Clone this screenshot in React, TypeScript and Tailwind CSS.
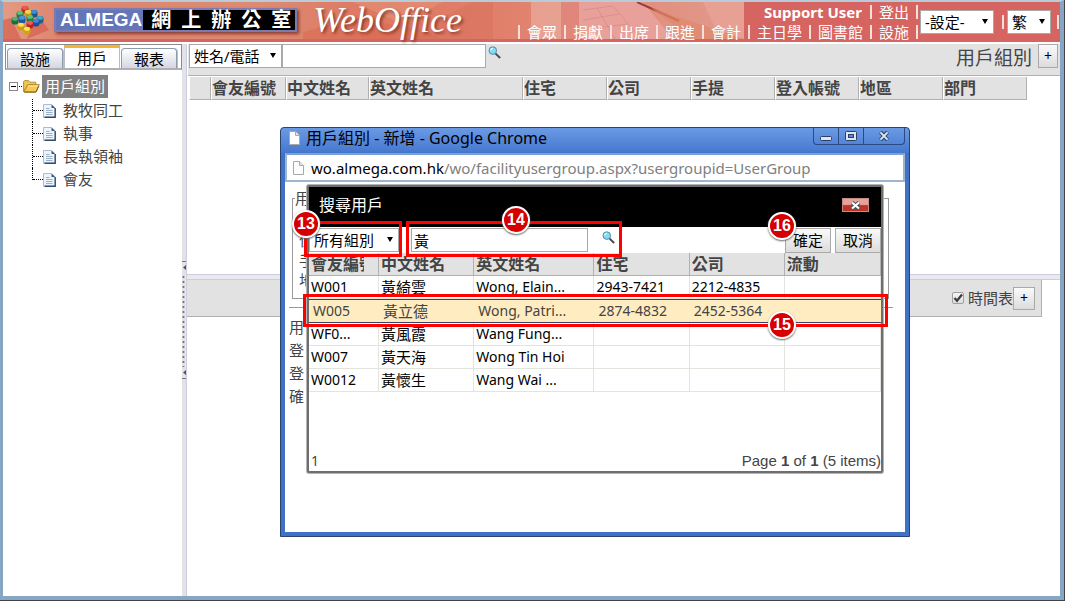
import React from "react";

const MENU = ["會眾", "捐獻", "出席", "跟進", "會計", "主日學", "圖書館", "設施"];

const GROUPS = ["教牧同工", "執事", "長執領袖", "會友"];

const MAIN_COLUMNS = [
  { label: "", width: "w-[22px]" },
  { label: "會友編號", width: "w-[75px]" },
  { label: "中文姓名", width: "w-[83px]" },
  { label: "英文姓名", width: "w-[154px]" },
  { label: "住宅", width: "w-[84px]" },
  { label: "公司", width: "w-[84px]" },
  { label: "手提", width: "w-[84px]" },
  { label: "登入帳號", width: "w-[84px]" },
  { label: "地區", width: "w-[84px]" },
  { label: "部門", width: "w-[84px]" },
];

const SEARCH_COLUMNS = [
  { label: "會友編號", width: "w-[70px]" },
  { label: "中文姓名", width: "w-[95px]" },
  { label: "英文姓名", width: "w-[120px]" },
  { label: "住宅", width: "w-[95px]" },
  { label: "公司", width: "w-[95px]" },
  { label: "流動", width: "w-[96px]" },
];

const USERS = [
  ["W001", "黃綺雲", "Wong, Elain...", "2943-7421", "2212-4835", ""],
  ["W005", "黃立德", "Wong, Patri...", "2874-4832", "2452-5364", ""],
  ["WF0...", "黃風霞", "Wang Fung...", "", "", ""],
  ["W007", "黃天海", "Wong Tin Hoi", "", "", ""],
  ["W0012", "黃懷生", "Wang Wai ...", "", "", ""],
];

const SELECTED = "W005";

function Picker({
  label,
  value,
  className,
}: {
  label: string;
  value: string;
  className: string;
}) {
  return (
    <span className={`relative flex h-6 ${className}`}>
      <select
        aria-label={label}
        defaultValue={value}
        className="h-full w-full appearance-none border border-[#a9a9a9] bg-white pl-1 text-[15px] leading-5 text-black"
      >
        <option>{value}</option>
      </select>
      <svg
        viewBox="0 0 6 5"
        className="pointer-events-none absolute top-[9px] right-1.5 h-[5px] w-1.5"
      >
        <path d="M0 0H6L3 5Z" fill="#000" />
      </svg>
    </span>
  );
}

function Magnifier() {
  return (
    <svg viewBox="0 0 13 13" className="size-[13px]">
      <path d="M7.6 7.6 11.6 11.4" stroke="#4a4a4a" strokeWidth="2" strokeLinecap="round" />
      <circle cx="4.8" cy="4.6" r="3.8" fill="#7fdcf7" stroke="#5d86a0" strokeWidth="1" />
      <path d="M2.8 4.4A2.2 2.2 0 0 1 5 2.4" stroke="#e4fbff" strokeWidth="1.3" fill="none" />
    </svg>
  );
}

function PageIcon() {
  return (
    <svg viewBox="0 0 13 14" className="h-3.5 w-[13px]">
      <path d="M.5 .5H8.5L12.2 4V13.3H.5Z" fill="#eef4fb" stroke="#a7bbdb" />
      <path d="M12.2 4V13.3H1.5" fill="none" stroke="#2f4d6e" strokeWidth="1.4" />
      <path d="M8.5 .5V4H12.2Z" fill="#3b5a7c" />
      <path d="M3 4.5H6.5M3 6.5H9.5M3 8.5H9.5M3 10.5H9.5" stroke="#9db0c9" />
    </svg>
  );
}

function BlankPage() {
  return (
    <svg viewBox="0 0 11 14" className="h-3.5 w-[11px]">
      <path d="M.5 .5H6.5L10.5 4.5V13.5H.5Z" fill="#fdfdfd" stroke="#a8a8a8" />
      <path d="M6.5 .5V4.5H10.5" fill="#e8e8e8" stroke="#a8a8a8" />
    </svg>
  );
}

function FolderIcon() {
  return (
    <svg viewBox="0 0 17 13" className="h-[13px] w-[17px]">
      <path d="M.6 11.5V1.6L1.6 .6H5.5L7 2.2H12.8V4.5H5Z" fill="#f3c64c" stroke="#a8873a" strokeWidth=".9" />
      <path d="M.9 12 4.8 4.6H16.3L13 12Z" fill="#fbc94a" stroke="#b0842c" strokeWidth=".9" />
      <path d="M5.3 5.4H15L14.5 6.6H4.7Z" fill="#ffe9a6" />
      <path d="M1.2 12.1H13L15.8 6" fill="none" stroke="#7c5c1c" strokeWidth="1" />
    </svg>
  );
}

function Logo() {
  const blocks: [number, number, string, string][] = [
    [15, 5, "#b92626", "#ee5a4c"],
    [10, 10, "#2c7d45", "#5cc07c"],
    [24, 9, "#1c5490", "#3f8ed0"],
    [18, 9, "#c29a1c", "#f4d84c"],
    [30, 15, "#205f86", "#48a4c4"],
    [5, 16, "#1d6e3e", "#4ab478"],
    [12, 15, "#1d56a4", "#4b94e0"],
    [20, 14, "#2a8048", "#5ec284"],
    [26, 18, "#1f4e9c", "#4a86d8"],
    [11, 22, "#cf9c10", "#fae04e"],
    [20, 20, "#b82424", "#ee5c4c"],
    [17, 26, "#d2a312", "#fce758"],
  ];
  return (
    <svg viewBox="0 0 34 32" className="h-8 w-[34px] shrink-0">
      {blocks.map(([x, y, side, top]) => (
        <g key={`${x}-${y}`}>
          <rect x={x - 3.5} y={y - 3} width="7" height="7.5" rx="2.4" fill={side} />
          <ellipse cx={x} cy={y - 1.2} rx="2.9" ry="2" fill={top} />
        </g>
      ))}
    </svg>
  );
}

function BannerArt() {
  return (
    <svg
      viewBox="0 0 741 37"
      preserveAspectRatio="none"
      className="absolute top-0 left-0 h-[37px] w-[741px]"
    >
      <defs>
        <linearGradient id="banner">
          <stop offset="0" stopColor="#e39a84" />
          <stop offset=".08" stopColor="#dc8570" />
          <stop offset=".35" stopColor="#de8a70" />
          <stop offset=".5" stopColor="#dd7863" />
          <stop offset=".66" stopColor="#e07f6a" />
          <stop offset="1" stopColor="#e29a8c" />
        </linearGradient>
      </defs>
      <rect width="741" height="37" fill="url(#banner)" />
      <path d="M0 18 8 16 18 37H0ZM28 24 38 17 46 28 24 37Z" fill="#d4604f" opacity=".7" />
      <path d="M300 30 350 16 420 28 440 37H300Z" fill="#d9694f" opacity=".55" />
      <path d="M350 0H440L400 22Z" fill="#e59376" opacity=".6" />
      <path d="M430 20 470 0H490V37H440Z" fill="#d8705c" opacity=".5" />
      <path d="M528 0H558V37H528Z" fill="#e8a898" opacity=".8" />
      <path d="M558 0H576V37H558Z" fill="#e0867a" />
      <path d="M576 0H640L670 37H576Z" fill="#e8a09a" />
      <path d="M580 8 610 4 638 37M580 18 616 12M580 28 624 22M594 6 612 37" fill="none" stroke="#d98886" opacity=".7" />
      <path d="M634 0 676 19" stroke="#a33b33" strokeWidth="2" />
      <path d="M648 6 741 37H690Z" fill="#e0876b" opacity=".7" />
      <path d="M700 0H741V37L712 26Z" fill="#e6a094" />
    </svg>
  );
}

function Bar() {
  return <span className="h-3.5 w-0.5 shrink-0 bg-[#f6dedc]" />;
}

function Header() {
  return (
    <header className="relative flex h-10 items-start bg-[#d66461] text-white">
      <BannerArt />
      <div className="relative flex min-w-0 flex-1 items-center pl-[7px]">
        <Logo />
        <div className="ml-2.5 flex h-6 items-center border-2 border-[#7c7bb0] bg-[#6475b8] shadow-[2px_2px_3px_#8a3c34]">
          <span className="pr-px pl-1 font-['Liberation_Sans',sans-serif] text-[19px] leading-5 font-bold">
            ALMEGA
          </span>
          <span className="flex h-5 items-center gap-2.5 bg-black pr-1 pl-2 font-['Liberation_Serif','Noto_Sans_CJK_TC',serif] text-xl leading-5 font-bold">
            {["網", "上", "辦", "公", "室"].map((c) => (
              <span key={c}>{c}</span>
            ))}
          </span>
        </div>
        <span className="ml-4 font-['Liberation_Serif',serif] text-4xl leading-9 italic [text-shadow:2px_2px_3px_#8a3c34]">
          WebOffice
        </span>
      </div>
      <nav className="relative flex shrink-0 flex-col items-end text-[15px] leading-5">
        <div className="flex items-center">
          <b className="px-2">Support User</b>
          <Bar />
          <a href="#logout" className="px-[7px]">
            登出
          </a>
          <Bar />
        </div>
        <div className="flex items-center">
          <Bar />
          {MENU.map((item) => (
            <React.Fragment key={item}>
              <a href={`#${item}`} className="px-[7px]">
                {item}
              </a>
              <Bar />
            </React.Fragment>
          ))}
        </div>
      </nav>
      <div className="relative mt-2 flex items-center gap-1 pr-px pl-0.5">
        <Picker label="設定" value="-設定-" className="w-[74px]" />
        <span className="flex items-center gap-[3px] pl-1">
          <Bar />
          <Picker label="語言" value="繁" className="w-11" />
        </span>
        <span className="pl-0.5">
          <span className="block h-3.5 w-0.5 bg-[#f6dedc]" />
        </span>
      </div>
    </header>
  );
}

function Sidebar() {
  const idle =
    "h-5 w-14 rounded-t border border-b-0 border-[#8c9cab] bg-linear-to-b from-white to-[#d5d6e2] shadow-[1px_0_0_#b8bcd0]";
  return (
    <aside className="flex w-[179px] shrink-0 flex-col">
      <div className="ml-0.5 flex h-[26px] items-end gap-px overflow-hidden border border-b-2 border-[#8b8b8b] border-b-[#b0b0b0] bg-white px-px text-[15px] leading-5 text-black">
        <button className={idle}>設施</button>
        <button className="h-[23px] w-14 border-x border-t-[3px] border-[#b9bcc6] border-t-[#f7b32b] bg-white">
          用戶
        </button>
        <button className={idle}>報表</button>
      </div>
      <div className="px-1.5 pt-[5px] text-[15px] leading-[23px] text-[#444]">
        <div className="flex items-center">
          <button
            aria-label="收合"
            className="flex size-[9px] items-center justify-center border border-[#888] bg-white"
          >
            <span className="h-px w-[5px] bg-black" />
          </button>
          <span className="mx-px w-[3px] border-t border-dotted border-black" />
          <FolderIcon />
          <a href="#all" className="ml-0.5 bg-[#808080] px-[3px] text-white">
            用戶組別
          </a>
        </div>
        <ul className="ml-[23px] pt-px">
          {GROUPS.map((name, i) => (
            <li key={name} className="flex h-[23px] items-center">
              <span
                className={
                  i === GROUPS.length - 1
                    ? "h-3 self-start border-l border-dotted border-black"
                    : "h-full border-l border-dotted border-black"
                }
              />
              <span className="w-2.5 border-t border-dotted border-black" />
              <a href={`#${name}`} className="flex items-center gap-[7px]">
                <PageIcon />
                {name}
              </a>
            </li>
          ))}
        </ul>
      </div>
    </aside>
  );
}

function Splitter() {
  return (
    <div className="flex w-[5px] shrink-0 flex-col items-center border-r border-[#cdcdde] bg-[#e2e2ea] pt-[217px]">
      <svg viewBox="0 0 4 118" className="h-[118px] w-1">
        <path d="M0 .5H4M0 117.5H4" stroke="#777" />
        <path d="M4 4V9L1 6.5ZM4 109V114L1 111.5Z" fill="#555" />
        <path d="M2 15V106" stroke="#fff" strokeWidth="3" strokeDasharray="2 3" />
        <path d="M1.5 15V106" stroke="#777" strokeWidth="2" strokeDasharray="2 3" />
      </svg>
    </div>
  );
}

const raised =
  "border border-[#a9a9a9] bg-linear-to-b from-[#fafafa] to-[#dcdcdc] text-black";

function Main() {
  return (
    <main className="flex min-w-0 flex-1 flex-col">
      <div className="ml-px flex h-8 items-start border-b border-[#b0b0b0] bg-[#e2e2e2] pl-px">
        <Picker label="搜尋欄位" value="姓名/電話" className="w-[93px]" />
        <input
          aria-label="搜尋"
          className="h-6 w-[204px] border border-[#a9a9a9] bg-white px-1 text-[15px]"
        />
        <button aria-label="開始搜尋" className="ml-0.5 pt-0.5">
          <Magnifier />
        </button>
        <h1 className="ml-auto pr-1.5 text-[19px] leading-7 text-[#444]">用戶組別</h1>
        <button aria-label="新增" className={`mr-0.5 h-6 w-5 text-sm leading-5 ${raised}`}>
          +
        </button>
      </div>
      <div className="h-[198px] pt-px">
        <table className="ml-0.5 w-[838px] table-fixed border-separate border-spacing-0 text-left text-base leading-[21px] text-[#444]">
          <thead>
            <tr>
              {MAIN_COLUMNS.map((c) => (
                <th
                  key={c.label}
                  className={`h-[23px] overflow-hidden border-r border-b border-l border-[#b0b0b0] border-l-white bg-[#e2e2e2] p-0 font-bold whitespace-nowrap ${c.width}`}
                >
                  {c.label}
                </th>
              ))}
            </tr>
          </thead>
        </table>
      </div>
      <div className="h-1.5 border-y border-[#cdcdde] bg-[#e9e9f2]" />
      <div className="mr-[18px] flex h-[37px] items-center justify-end border-r border-b border-[#b0b0b0] bg-[#e2e2e2] pr-1.5 text-[15px] text-[#444]">
        <label className="flex items-center gap-1">
          <span className="relative flex size-3">
            <input
              type="checkbox"
              defaultChecked
              className="size-3 appearance-none rounded-xs border border-[#a0a0a0] bg-linear-to-b from-[#f4f4f4] to-[#dedede]"
            />
            <svg viewBox="0 0 12 12" className="pointer-events-none absolute inset-0 size-3">
              <path d="M2.5 6 5 8.8 10 2.5" fill="none" stroke="#3c3c3c" strokeWidth="2.2" />
            </svg>
          </span>
          時間表
        </label>
        <button aria-label="新增時間表" className={`h-[23px] w-[22px] text-sm leading-5 ${raised}`}>
          +
        </button>
      </div>
    </main>
  );
}

function SearchDialog() {
  return (
    <section className="absolute top-[3px] left-[22px] flex h-[288px] w-[576px] flex-col rounded-xs border-2 border-[#6e6e6e] bg-white ring-1 ring-[#b4b4b4]">
      <div className="flex h-10 shrink-0 items-center justify-between bg-black pr-3 pb-1 pl-2.5 text-white">
        <h2 className="text-base leading-6">搜尋用戶</h2>
        <button
          aria-label="關閉"
          className="flex h-3.5 w-[27px] items-center justify-center border border-[#c58a86] bg-linear-to-b from-[#e2a49b] from-45% to-[#b93626] to-55%"
        >
          <svg viewBox="0 0 11 9" className="h-[9px] w-[11px]">
            <path d="M2 1.5 9 7.5M9 1.5 2 7.5" stroke="#4b4b57" strokeWidth="4" />
            <path d="M2 1.5 9 7.5M9 1.5 2 7.5" stroke="#fff" strokeWidth="2.2" />
          </svg>
        </button>
      </div>
      <div className="flex h-[26px] shrink-0 items-center">
        <Picker label="組別" value="所有組別" className="w-[90px]" />
        <input
          aria-label="姓名"
          defaultValue="黃"
          className="ml-3 h-6 w-[177px] border border-[#a9a9a9] bg-white px-0.5 text-[15px] text-black"
        />
        <button aria-label="搜尋姓名" className="mb-1.5 ml-3.5">
          <Magnifier />
        </button>
        <button className={`ml-auto h-[25px] w-[46px] text-[15px] leading-5 ${raised}`}>確定</button>
        <button className={`ml-1 h-[25px] w-[46px] text-[15px] leading-5 ${raised}`}>取消</button>
      </div>
      <table className="w-full table-fixed border-separate border-spacing-0 text-left text-sm leading-[22px] whitespace-nowrap text-black">
        <thead>
          <tr>
            {SEARCH_COLUMNS.map((c) => (
              <th
                key={c.label}
                className={`h-[23px] border-r border-b border-[#b0b0b0] bg-[#e2e2e2] p-0 pl-0.5 text-base leading-[22px] font-bold text-[#444] ${c.width}`}
              >
                <div className="mr-3.5 overflow-hidden">{c.label}</div>
              </th>
            ))}
          </tr>
        </thead>
        <tbody>
          {USERS.map((row) => (
            <tr key={row[0]} className={row[0] === SELECTED ? "bg-[#ffecc0] text-[#444]" : ""}>
              {row.map((cell, i) => (
                <td
                  key={i}
                  className={`overflow-hidden p-0 align-top ${i === 1 ? "text-[15px]" : ""} ${
                    row[0] === SELECTED
                      ? "h-6 border-y border-[#3f3f66] pl-1"
                      : "h-[23px] border-r border-b border-[#e4e4de] pl-0.5"
                  }`}
                >
                  {cell}
                </td>
              ))}
            </tr>
          ))}
        </tbody>
      </table>
      <div className="mt-auto flex justify-between pl-0.5 text-[#444]">
        <a href="#page-1" className="text-sm leading-5">
          1
        </a>
        <p className="font-['Liberation_Sans',sans-serif] text-[15px] leading-5">
          Page <b>1</b> of <b>1</b> (5 items)
        </p>
      </div>
    </section>
  );
}

function PopupWindow() {
  return (
    <div className="absolute top-[127px] left-[280px] flex h-[410px] w-[630px] flex-col rounded-t border border-[#2c4370] bg-[#3f72c6] px-1 pb-1">
      <div className="-mx-1 flex h-[25px] shrink-0 items-start rounded-t bg-linear-to-b from-[#6b9ae4] to-[#4577ce] pr-1 pl-2 text-black">
        <span className="pt-[3px]">
          <BlankPage />
        </span>
        <h2 className="pl-1.5 text-base leading-[21px]">用戶組別 - 新增 - Google Chrome</h2>
        <div className="ml-auto flex h-[17px] rounded-b border border-t-0 border-[#2a4a86]">
          <button aria-label="最小化" className="flex w-[25px] items-center justify-center border-r border-[#2a4a86]">
            <svg viewBox="0 0 12 5" className="mt-1 h-[5px] w-3">
              <rect x=".5" y=".5" width="11" height="4" rx="1" fill="#dce6f4" stroke="#2c3f66" />
            </svg>
          </button>
          <button aria-label="最大化" className="flex w-[25px] items-center justify-center border-r border-[#2a4a86]">
            <svg viewBox="0 0 12 10" className="h-2.5 w-3">
              <rect x=".5" y=".5" width="11" height="9" rx="1" fill="#dce6f4" stroke="#2c3f66" />
              <rect x="3.5" y="3.5" width="5" height="3" fill="#5b86d0" stroke="#2c3f66" />
            </svg>
          </button>
          <button aria-label="關閉視窗" className="flex w-10 items-center justify-center">
            <svg viewBox="0 0 12 10" className="h-2.5 w-3">
              <path d="M2.5 1 9.5 9M9.5 1 2.5 9" stroke="#2c3f66" strokeWidth="3.8" />
              <path d="M2.5 1.4 9.5 8.6M9.5 1.4 2.5 8.6" stroke="#dce6f4" strokeWidth="2" />
            </svg>
          </button>
        </div>
      </div>
      <div className="flex h-[29px] shrink-0 items-center border-2 border-[#9fb4cd] border-t-[#7ba0d4] bg-white pl-1.5">
        <BlankPage />
        <span className="pl-[7px] text-[15px] leading-6 whitespace-nowrap text-[#808080]">
          <span className="text-black">wo.almega.com.hk</span>
          /wo/facilityusergroup.aspx?usergroupid=UserGroup
        </span>
      </div>
      <div className="relative flex-1 bg-white px-1 pt-1.5 text-[15px] leading-[23px] text-[#444]">
        <fieldset className="mr-3 ml-[3px] h-[111px] border border-[#999] pl-1.5">
          <legend className="-ml-1 leading-5">用</legend>
          <p className="pt-[22px] leading-5">住</p>
          <p className="leading-5">手</p>
          <p className="leading-5">地</p>
        </fieldset>
        <hr className="mt-2 mr-2 mb-2 border-[#999]" />
        <p>用</p>
        <p>登</p>
        <p>登</p>
        <p>確</p>
        <SearchDialog />
      </div>
    </div>
  );
}

const badge =
  "absolute flex size-7 items-center justify-center rounded-full border-2 border-white bg-[#d60000] font-['Liberation_Sans',sans-serif] text-base leading-4 font-bold text-white shadow-[0_1px_2px_#666]";

function Callouts() {
  return (
    <div className="pointer-events-none">
      <div className="absolute top-[221px] left-[304px] h-9 w-[98px] border-[3px] border-[#ff0000]" />
      <div className="absolute top-[221px] left-[406px] h-9 w-[216px] border-[3px] border-[#ff0000]" />
      <div className="absolute top-[294px] left-[303px] h-[33px] w-[585px] border-[3px] border-[#ff0000]" />
      <span className={`${badge} top-[210px] left-[292px]`}>13</span>
      <span className={`${badge} top-[206px] left-[502px]`}>14</span>
      <span className={`${badge} top-[311px] left-[768px]`}>15</span>
      <span className={`${badge} top-[212px] left-[768px]`}>16</span>
    </div>
  );
}

export default function App() {
  return (
    <div className="relative flex min-h-screen flex-col bg-[#444] pr-px pb-px font-['Noto_Sans','Noto_Sans_CJK_TC',sans-serif]">
      <div className="flex flex-1 flex-col border-t-2 border-r-4 border-b-4 border-l-[3px] border-[#87a6c4] border-t-[#b9cbd8] bg-white">
        <Header />
        <div className="flex flex-1 border-t border-white pt-px">
          <Sidebar />
          <Splitter />
          <Main />
        </div>
      </div>
      <PopupWindow />
      <Callouts />
    </div>
  );
}
